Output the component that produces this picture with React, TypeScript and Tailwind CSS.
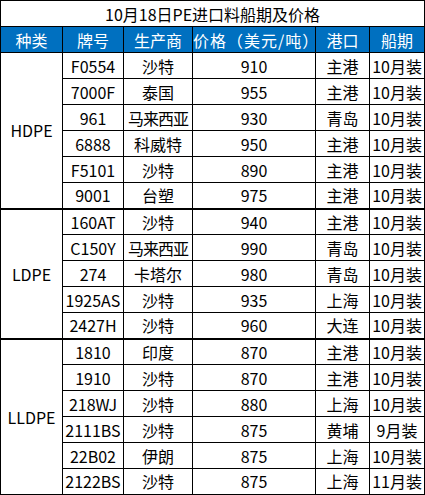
import React from "react";

type Row = [string, string, string, string, string];

const groups: { name: string; rows: Row[] }[] = [
  {
    name: "HDPE",
    rows: [
      ["F0554", "沙特", "910", "主港", "10月装"],
      ["7000F", "泰国", "955", "主港", "10月装"],
      ["961", "马来西亚", "930", "青岛", "10月装"],
      ["6888", "科威特", "950", "主港", "10月装"],
      ["F5101", "沙特", "890", "主港", "10月装"],
      ["9001", "台塑", "975", "主港", "10月装"],
    ],
  },
  {
    name: "LDPE",
    rows: [
      ["160AT", "沙特", "940", "主港", "10月装"],
      ["C150Y", "马来西亚", "990", "青岛", "10月装"],
      ["274", "卡塔尔", "980", "青岛", "10月装"],
      ["1925AS", "沙特", "935", "上海", "10月装"],
      ["2427H", "沙特", "960", "大连", "10月装"],
    ],
  },
  {
    name: "LLDPE",
    rows: [
      ["1810", "印度", "870", "主港", "10月装"],
      ["1910", "沙特", "870", "主港", "10月装"],
      ["218WJ", "沙特", "880", "上海", "10月装"],
      ["2111BS", "沙特", "875", "黄埔", "9月装"],
      ["22B02", "伊朗", "875", "上海", "10月装"],
      ["2122BS", "沙特", "875", "上海", "11月装"],
    ],
  },
];

const headers = ["种类", "牌号", "生产商", "价格（美元/吨）", "港口", "船期"];

export default function App() {
  return (
    <div
      className="bg-white w-[425px] h-[495px] overflow-hidden text-black"
      style={{ fontFamily: '"Noto Sans CJK SC", "Noto Sans", sans-serif' }}
    >
      <table className="table-fixed border-collapse w-[424px] text-[16px] leading-none">
        <colgroup>
          <col className="w-[62px]" />
          <col className="w-[61px]" />
          <col className="w-[69px]" />
          <col className="w-[123px]" />
          <col className="w-[54px]" />
          <col className="w-[55px]" />
        </colgroup>
        <tbody>
          <tr className="h-[26px]">
            <td colSpan={6} className="border border-black text-center p-0 whitespace-nowrap">
              10月18日PE进口料船期及价格
            </td>
          </tr>
          <tr className="h-[26px] bg-[#0070c0] text-white">
            {headers.map((h, i) => (
              <td
                key={h}
                className={`border border-black text-center p-0 whitespace-nowrap ${
                  i === 3 ? "tracking-[1px]" : ""
                }`}
              >
                {h}
              </td>
            ))}
          </tr>
          {groups.map((g) =>
            g.rows.map((r, ri) => {
              const last = ri === g.rows.length - 1;
              const bottom = last ? "border-b-2" : "";
              return (
                <tr key={g.name + ri} className="h-[26px]">
                  {ri === 0 && (
                    <td
                      rowSpan={g.rows.length}
                      className="border border-black border-b-2 text-center p-0"
                    >
                      {g.name}
                    </td>
                  )}
                  {r.map((c, ci) => (
                    <td
                      key={ci}
                      className={`border border-black ${bottom} text-center p-0 whitespace-nowrap ${
                        ci === 1 && c.length === 4 ? "tracking-[-1px]" : ""
                      }`}
                    >
                      {c}
                    </td>
                  ))}
                </tr>
              );
            })
          )}
        </tbody>
      </table>
    </div>
  );
}
